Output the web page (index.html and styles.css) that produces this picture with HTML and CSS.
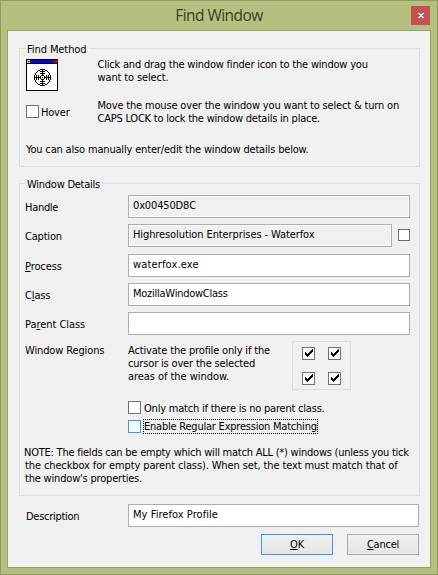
FILE: index.html
```html
<!DOCTYPE html>
<html lang="en">
<head>
<meta charset="utf-8">
<title>Find Window</title>
<link rel="stylesheet" href="styles.css">
</head>
<body>
<svg class="defs" width="0" height="0" aria-hidden="true">
  <symbol id="tick" viewBox="0 0 11 11"><path d="M2 4h1v1h1v1h1V5h1V4h1V3h1V2h1V1h1v3H9v1H8v1H7v1H6v1H5v1H4V8H3V7H2z" /></symbol>
</svg>
<div class="window">
  <header class="titlebar">
    <h1>Find Window</h1>
    <span class="close"><svg width="6" height="5" viewBox="0 0 6 5" shape-rendering="crispEdges"><path d="M0 0h2v1h2V0h2v1H5v1H4v1h1v1h1v1H4V4H2v1H0V4h1V3h1V2H1V1H0z"/></svg></span>
  </header>
  <main class="client">
    <section class="group method">
      <h2 class="legend s-find">Find Method</h2>
      <div class="finder">
        <svg class="target" width="32" height="32" viewBox="0 0 32 32" shape-rendering="crispEdges">
          <path d="M0 0h32v32H0z"/><path fill="#fff" d="M1 5h30v26H1z"/>
          <path fill="#c0c0c0" d="M1 1h3v3H1z"/><path d="M2 2h1v1H2z"/>
          <path fill="#00f" d="M5 1h22v3H5z"/><path fill="#f00" d="M28 1h3v3h-3z"/><path d="M29 2h1v1h-1z"/>
          <path d="M14 10h5v1h-5zM12 11h2v1h-2zM19 11h2v1h-2zM11 12h1v1h-1zM21 12h1v1h-1zM10 13h1v1h-1zM22 13h1v1h-1zM9 14h1v2H9zM23 14h1v2h-1zM8 16h1v5H8zM24 16h1v5h-1zM9 21h1v2H9zM23 21h1v2h-1zM10 23h1v1h-1zM22 23h1v1h-1zM11 24h1v1h-1zM21 24h1v1h-1zM12 25h2v1h-2zM19 25h2v1h-2zM14 26h5v1h-5z"/>
          <path d="M16 11h1v5h-1zM16 21h1v5h-1zM9 18h5v1H9zM19 18h5v1h-5zM14 12h5v1h-5zM14 14h5v1h-5zM14 22h5v1h-5zM14 24h5v1h-5zM10 16h1v5h-1zM12 16h1v5h-1zM20 16h1v5h-1zM22 16h1v5h-1z"/>
          <path d="M15 16h3v1h-3zM15 20h3v1h-3zM14 17h1v3h-1zM18 17h1v3h-1zM16 18h1v1h-1z"/>
        </svg>
        <p><span class="s-click">Click and drag the window finder icon to the window you</span><br><span class="s-want">want to select.</span></p>
      </div>
      <div class="finder hover">
        <label class="check"><i class="box"></i><span class="s-hover">Hover</span></label>
        <p><span class="s-move">Move the mouse over the window you want to select &amp; turn on</span><br><span class="s-caps">CAPS LOCK to lock the window details in place.</span></p>
      </div>
      <p class="manual s-also">You can also manually enter/edit the window details below.</p>
    </section>

    <section class="group details">
      <h2 class="legend s-details">Window Details</h2>
      <div class="row"><span class="name s-handle">Handle</span><div class="field readonly s-hex">0x00450D8C</div></div>
      <div class="row"><span class="name s-caption">Caption</span><div class="field readonly s-high">Highresolution Enterprises - Waterfox</div><i class="box small"></i></div>
      <div class="row process"><span class="name s-process"><u>P</u>rocess</span><div class="field s-exe">waterfox.exe</div></div>
      <div class="row"><span class="name s-class">C<u>l</u>ass</span><div class="field s-moz">MozillaWindowClass</div></div>
      <div class="row"><span class="name s-parent">Pa<u>r</u>ent Class</span><div class="field"></div></div>
      <div class="regions">
        <span class="s-regions">Window Regions</span>
        <p><span class="s-act">Activate the profile only if the</span><br><span class="s-cursor">cursor is over the selected</span><br><span class="s-areas">areas of the window.</span></p>
        <div class="quad">
          <i class="box"><svg><use href="#tick"/></svg></i><i class="box"><svg><use href="#tick"/></svg></i>
          <i class="box"><svg><use href="#tick"/></svg></i><i class="box"><svg><use href="#tick"/></svg></i>
        </div>
      </div>
      <div class="options">
        <label class="check"><i class="box"></i><span class="s-only">Only match if there is no parent class.</span></label>
        <label class="check"><i class="box hot"></i><span class="focus s-enable">Enable Regular Expression Matching</span></label>
      </div>
      <p class="note"><span class="s-note1">NOTE: The fields can be empty which will match ALL (*) windows (unless you tick</span><br><span class="s-note2">the checkbox for empty parent class). When set, the text must match that of</span><br><span class="s-note3">the window's properties.</span></p>
    </section>

    <div class="row description"><span class="name s-desc">Description</span><div class="field s-profile">My Firefox Profile</div></div>
    <footer class="buttons">
      <button class="default" type="button"><u>O</u>K</button>
      <button class="s-cancel" type="button"><u>C</u>ancel</button>
    </footer>
  </main>
</div>
</body>
</html>
```
FILE: styles.css
```css
* { box-sizing: border-box; }
body { margin: 0; font: 11px/13px "DejaVu Sans Condensed", "DejaVu Sans", sans-serif; color: #000; }
p, h1, h2 { margin: 0; font-weight: normal; }
p, span, h2, .field { white-space: nowrap; }
u { text-decoration: underline; text-underline-offset: 1px; text-decoration-thickness: 1px; text-decoration-skip-ink: none; }
.defs { position: absolute; }

.window { width: 438px; height: 575px; padding: 0 6px 6px; border: 1px solid #8f9a64; background: #b4c17e; }
.titlebar { position: relative; height: 29px; }
.titlebar h1 { font: 15.5px/29px "Open Sans", sans-serif; letter-spacing: -0.53px; color: #3a3e29; text-align: center; }
.close { position: absolute; right: 1px; top: 5px; width: 19px; height: 19px; background: #c75050; display: grid; place-items: center; }
.close svg { fill: #fff; }
.client { height: 538px; border: 1px solid #96a168; background: #f0f0f0; padding: 17px 10px 0 11px; }

.group { position: relative; border: 1px solid #dcdcdc; width: 401px; }
.legend { position: absolute; left: 6px; top: -6px; padding: 0 2px 0 1px; background: #f0f0f0; font-size: 11px; line-height: 13px; }
.method { height: 119px; padding: 9px 0 0 6px; }
.finder { display: grid; grid-template-columns: 71px 1fr; }
.finder p { padding-left: 0.5px; }
.target { margin-top: 1px; }
.hover { margin-top: 8px; }
.check { display: flex; gap: 1px; }
.hover .check { margin-top: 6px; }
.hover .check span { padding: 1px; }
.manual { margin-top: 18px; }

.details { height: 313px; margin-top: 16px; padding: 11px 9px 0 5px; }
.row { display: flex; height: 23px; margin-bottom: 6px; }
.process { margin-top: 7px; }
.name { flex: 0 0 103px; padding-top: 6px; }
.field { flex: 1; padding: 3px 4px; border: 1px solid #abadb3; background: #fff; }
.readonly { background: #f0f0f0; box-shadow: inset 0 0 0 1px #fff; }
.box { display: block; flex: none; width: 13px; height: 13px; border: 1px solid #707070; background: #fff; }
.box svg { display: block; width: 11px; height: 11px; shape-rendering: crispEdges; }
.small { width: 12px; height: 12px; margin: 5px 0 0 6px; }
.hot { border-color: #3399ff; background: #f3f9ff; }
.regions { display: grid; grid-template-columns: 103px 164px 59px; height: 49px; }
.regions > span, .regions > p { padding-top: 3px; }
.quad { display: grid; grid-template-columns: 13px 13px; gap: 12px 13px; padding: 5px 0 0 9px; border: 1px solid #dcdcdc; align-content: start; }
.options { display: grid; gap: 4px; margin: 11px 0 0 103px; }
.options .check { height: 15px; gap: 2px; }
.options span { height: 15px; padding: 1px 0 0 1px; }
.focus { position: relative; top: -1px; width: 175px; outline: 1px dotted #000; outline-offset: -1px; }
.note { margin: 11px 0 0 -1px; }

.description { margin: 8px 0 0 7px; width: 393px; height: 23px; }
.description .name { flex-basis: 102px; }
.buttons { display: flex; justify-content: flex-end; gap: 14px; margin-top: 7px; padding-right: 1px; }
.buttons button { width: 72px; height: 21px; padding: 0; border: 1px solid #acacac; background: linear-gradient(#f0f0f0, #e5e5e5); font: inherit; color: #000; }
.buttons .default { border-color: #3399ff; letter-spacing: -.14px; }

/* Per-line tracking */
.s-find { letter-spacing: -.087px; }
.s-click { letter-spacing: -.205px; }
.s-want { letter-spacing: -.138px; }
.s-move { letter-spacing: -.173px; }
.s-caps { letter-spacing: -.225px; }
.s-hover { letter-spacing: -.202px; }
.s-also { letter-spacing: -.171px; }
.s-details { letter-spacing: -.25px; }
.s-handle { letter-spacing: -.3px; }
.s-caption { letter-spacing: -.2px; }
.s-process { letter-spacing: -.1px; }
.s-class { letter-spacing: -.15px; }
.s-parent { letter-spacing: -.05px; }
.s-regions { letter-spacing: -.13px; }
.s-hex { letter-spacing: -.145px; }
.s-high { letter-spacing: -.1px; }
.s-exe { letter-spacing: .15px; }
.s-moz { letter-spacing: -.25px; }
.s-act { letter-spacing: -.16px; }
.s-cursor { letter-spacing: -.171px; }
.s-areas { letter-spacing: -.054px; }
.s-only { letter-spacing: -.21px; }
.s-enable { letter-spacing: -.22px; }
.s-note1 { letter-spacing: -.228px; }
.s-note2, .s-note3 { padding-left: 1px; }
.s-note2 { letter-spacing: -.12px; }
.s-note3 { letter-spacing: -.19px; }
.s-desc { letter-spacing: -.28px; }
.s-profile { letter-spacing: .05px; }
.s-cancel { letter-spacing: -.22px; }
```
